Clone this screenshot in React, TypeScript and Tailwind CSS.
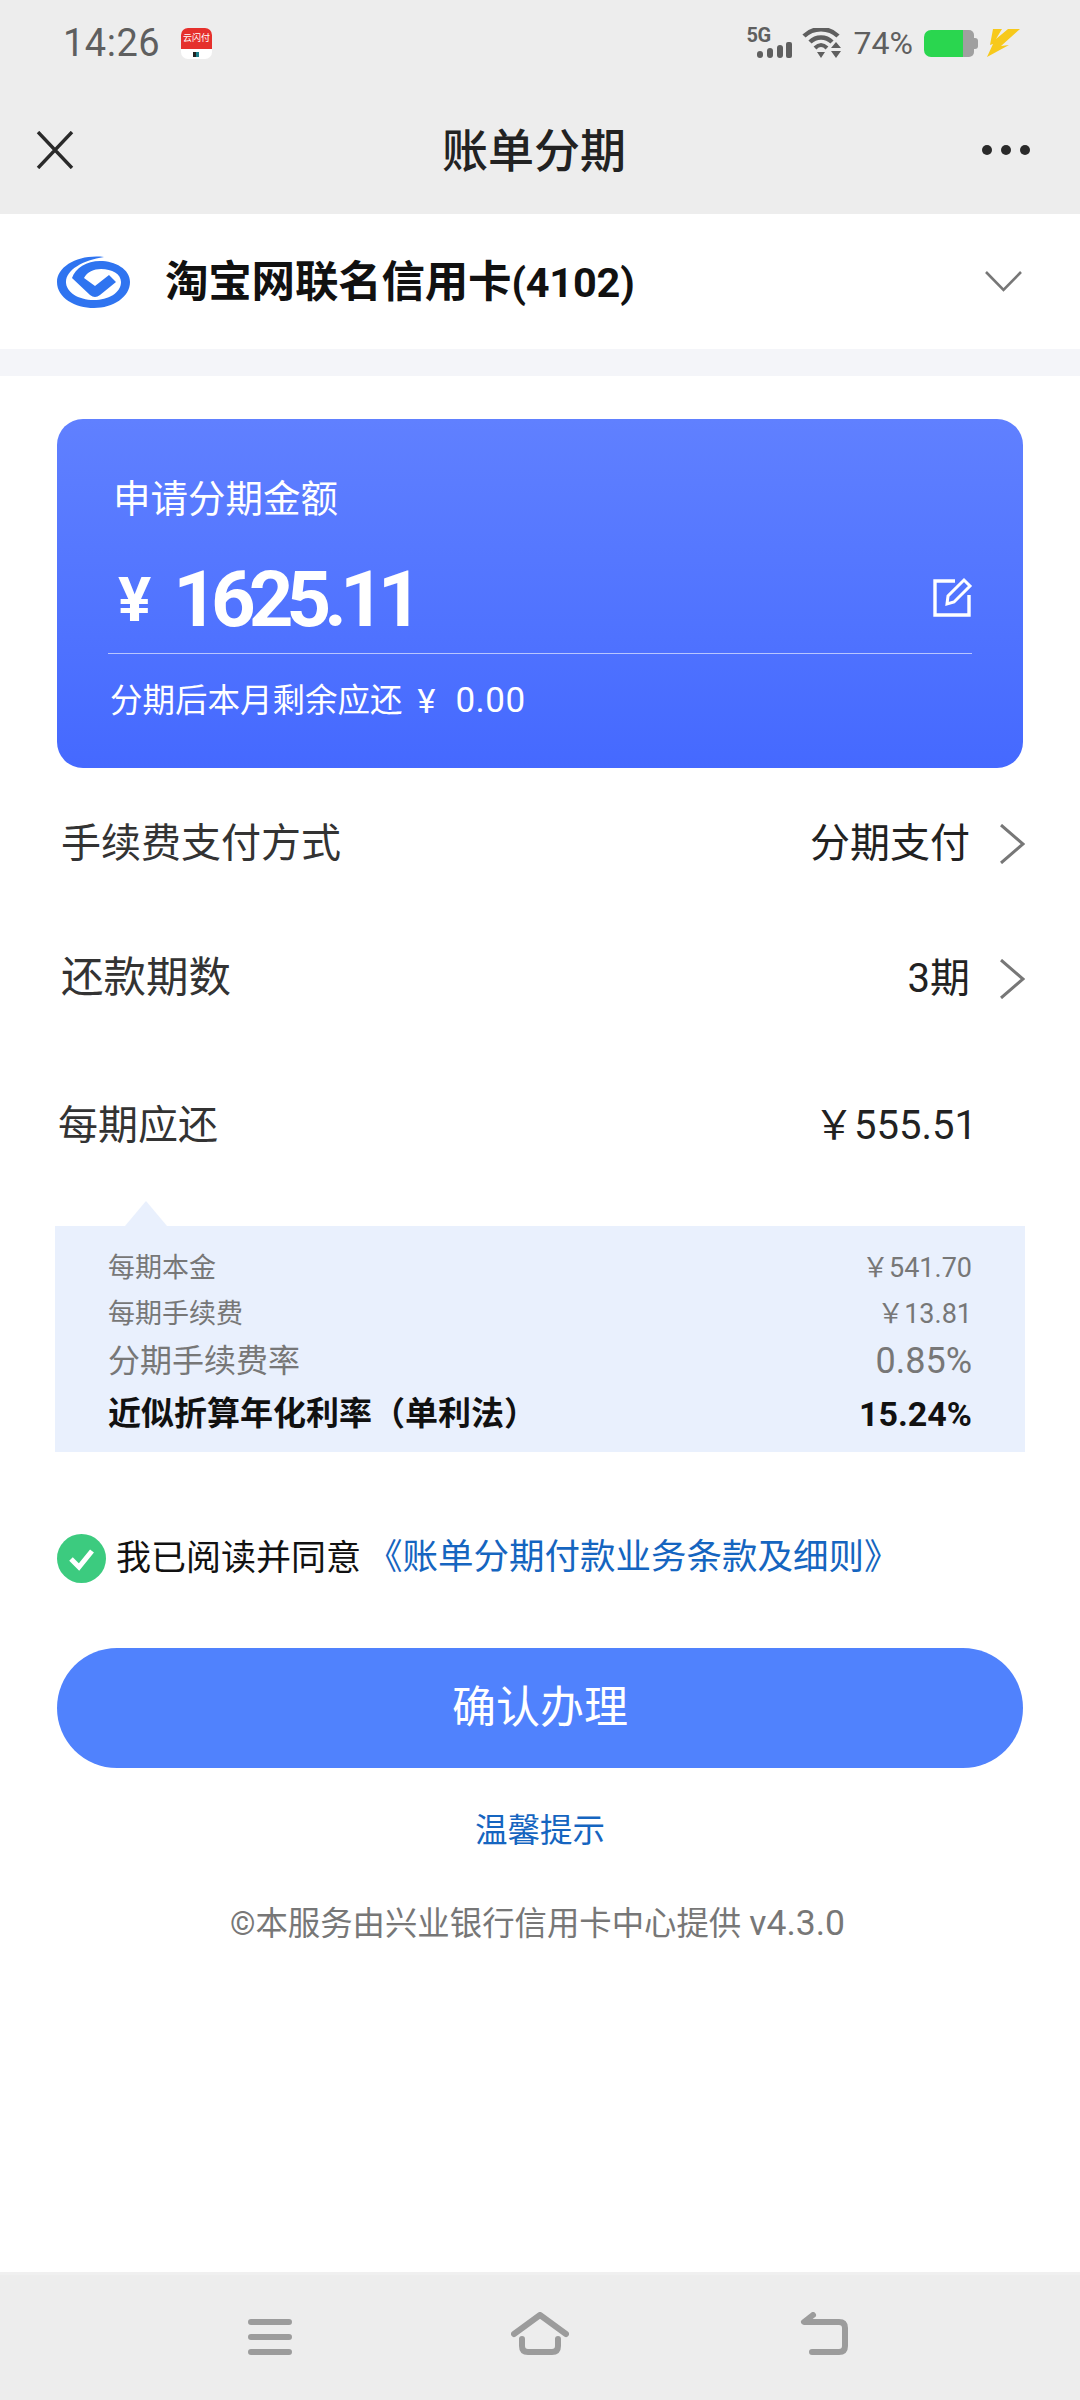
import React from 'react';

const FONT = "font-['Roboto','Noto_Sans_CJK_SC',sans-serif]";

function StatusBar() {
  return (
    <div className="flex h-[86px] items-center justify-between pl-[63px] pr-[60px] text-[#5f5f5f]">
      <div className="flex items-center gap-[21px]">
        <span className="text-[38px] leading-none tracking-[0.5px]">14:26</span>
        <svg width="31" height="31" viewBox="0 0 31 31">
          <rect width="31" height="31" rx="7" fill="#fff" />
          <path d="M0 7a7 7 0 0 1 7-7h17a7 7 0 0 1 7 7v14H0z" fill="#e5302c" />
          <text x="15.500" y="13" textAnchor="middle" fontSize="9" fill="#fff">云闪付</text>
          <rect x="12" y="24" width="3" height="5" fill="#222" />
          <rect x="15" y="24" width="3" height="5" fill="#1b7f8a" />
        </svg>
      </div>
      <div className="flex items-center">
        <div className="relative mr-[10px] h-[30px] w-[45px]">
          <span className="absolute left-0 top-[-4px] text-[20px] font-bold leading-[22px] tracking-[-0.5px]">5G</span>
          <svg className="absolute bottom-0 right-0" width="35" height="16" viewBox="0 0 35 16" fill="#5f5f5f">
            <rect x="0" y="9" width="6" height="7" rx="3" />
            <rect x="10" y="6" width="6" height="10" rx="3" />
            <rect x="20" y="3" width="6" height="13" rx="3" />
            <rect x="29" y="0" width="6" height="16" rx="2" />
          </svg>
        </div>
        <svg className="mr-[11px]" width="41" height="30" viewBox="0 0 41 30" fill="none">
          <path d="M2 8C11-1 27-1 36 8" stroke="#5f5f5f" strokeWidth="4.500" />
          <path d="M8 14C14 8 24 8 30 14" stroke="#5f5f5f" strokeWidth="4.500" />
          <path d="M13 20C17 16 21 16 25 20" stroke="#5f5f5f" strokeWidth="4" />
          <path d="M15 24h8l-4 6zM29 20l5-6 5 6zM29 23h10l-5 7z" fill="#5f5f5f" />
        </svg>
        <span className="mr-[11px] text-[32px] leading-none">74%</span>
        <div className="mr-[9px] flex h-[27px] w-[54px] items-center">
          <div className="h-full w-[39px] rounded-l-[7px] bg-[#2ad64f]" />
          <div className="h-full w-[11px] rounded-r-[5px] bg-[#a0a0a0]" />
          <div className="h-[11px] w-[4px] rounded-r-[3px] bg-[#a0a0a0]" />
        </div>
        <svg width="33" height="28" viewBox="0 0 33 28" fill="#f7c91c">
          <path d="M6 0h9L9 10l12-10h12L14 17l8-1L0 28l6-13-3 1z" />
        </svg>
      </div>
    </div>
  );
}

function TitleBar() {
  return (
    <div className="flex h-[128px] items-center justify-between pl-[36px] pr-[50px]">
      <svg width="38" height="38" viewBox="0 0 38 38" stroke="#2a2a2a" strokeWidth="3.400" fill="none">
        <path d="M2 1l34 36M36 1L2 37" />
      </svg>
      <h1 className="ml-[12px] mt-[2px] text-[46px] font-medium leading-none text-[#222]">账单分期</h1>
      <div className="flex gap-[9px]">
        <div className="h-[10px] w-[10px] rounded-full bg-[#2a2a2a]" />
        <div className="h-[10px] w-[10px] rounded-full bg-[#2a2a2a]" />
        <div className="h-[10px] w-[10px] rounded-full bg-[#2a2a2a]" />
      </div>
    </div>
  );
}

function CardSelect() {
  return (
    <div className="flex h-[135px] items-center bg-white pl-[57px] pr-[58px]">
      <svg width="73" height="54" viewBox="0 0 73 54" fill="#2f74f0">
        <path d="M47 2C22-1 0 11 0 27C0 43 18 53 37 53C56 53 73 42 73 27C73 14 58 6 43 6C30 6 18 13 15 23L33 40Q38 44 43 40L59 27L52 20L38 31L27 23C30 17 37 14 44 14C55 14 64 19 64 27C64 38 51 45 37 45C21 45 9 37 9 27C9 15 26 5 47 2Z" />
      </svg>
      <span className="ml-[35px] mt-[2px] text-[43.500px] font-bold leading-none tracking-[-0.2px] text-[#111]">
        淘宝网联名信用卡<span className="text-[41.500px]">(4102)</span>
      </span>
      <svg className="ml-auto" width="37" height="21" viewBox="0 0 37 21" fill="none" stroke="#777" strokeWidth="2.600">
        <path d="M1 1l17.500 18L36 1" />
      </svg>
    </div>
  );
}

function AmountCard() {
  return (
    <div className="mx-[57px] flex h-[349px] flex-col rounded-[26px] bg-gradient-to-b from-[#6080ff] to-[#4569ff] px-[51px] text-white">
      <div className="ml-[5px] mt-[60px] text-[37.500px] leading-[40px]">申请分期金额</div>
      <div className="mt-[51px] flex h-[60px] items-center">
        <span className="ml-[10px] text-[62px] font-bold leading-none">¥</span>
        <span className="ml-[22px] text-[78px] font-bold leading-none tracking-[-7px]">1625.11</span>
        <svg className="mb-[6px] ml-auto mr-[-1px]" width="40" height="40" viewBox="0 0 40 40" fill="none" stroke="#fff" strokeWidth="3.400">
          <path d="M22 4H2v34h34V18" />
          <path d="M14 27l1-8L31 3l6 6-16 16z" strokeWidth="3" />
        </svg>
      </div>
      <div className="mt-[23px] h-[1px] bg-white/60" />
      <div className="ml-[2px] mt-[27px] flex items-center text-[32.500px] leading-[40px]">
        <span>分期后本月剩余应还</span>
        <span className="ml-[15px] text-[34px]">¥</span>
        <span className="ml-[20px] text-[35px] tracking-[0.5px]">0.00</span>
      </div>
    </div>
  );
}

function SelectRow({ label, value, labelClass }: { label: string; value: string; labelClass: string }) {
  return (
    <div className="flex h-[135px] items-center pl-[61px] pr-[55px] text-[40px] leading-none">
      <span className={`text-[#333] ${labelClass}`}>{label}</span>
      <span className="ml-auto text-[#222]">{value}</span>
      <svg className="ml-[29px]" width="26" height="40" viewBox="0 0 26 40" fill="none" stroke="#777" strokeWidth="3">
        <path d="M2 1l22 19L2 39" />
      </svg>
    </div>
  );
}

function DetailRow({ label, value, className, valueClass = '' }: { label: string; value: string; className: string; valueClass?: string }) {
  return (
    <div className={`flex items-center justify-between ${className}`}>
      <span>{label}</span>
      <span className={valueClass}>{value}</span>
    </div>
  );
}

function Detail() {
  return (
    <div className="relative mx-[55px] mt-[70px] flex h-[226px] flex-col bg-[#e9f0fd] px-[53px] pt-[22px]">
      <svg className="absolute left-[70px] top-[-25px]" width="42" height="25" viewBox="0 0 42 25" fill="#e9f0fd">
        <path d="M0 25L21 0l21 25z" />
      </svg>
      <DetailRow label="每期本金" value="￥541.70" className="h-[40px] text-[27px] text-[#777]" />
      <DetailRow label="每期手续费" value="￥13.81" className="mt-[6px] h-[40px] text-[27px] text-[#777]" />
      <DetailRow label="分期手续费率" value="0.85%" className="mt-[7px] h-[40px] text-[32px] text-[#777]" valueClass="text-[36px]" />
      <DetailRow label="近似折算年化利率（单利法）" value="15.24%" className="mt-[13px] h-[40px] text-[33px] font-bold text-[#111]" valueClass="text-[34px]" />
    </div>
  );
}

function NavBar() {
  return (
    <div className="mt-auto h-[128px] border-t-[3px] border-[#f0f0f0] bg-[#ededed]">
      <div className="flex items-start pl-[248px] pt-[37px]">
        <svg className="mt-[7px]" width="44" height="36" viewBox="0 0 44 36" fill="none" stroke="#9c9c9c" strokeWidth="6" strokeLinecap="round">
          <path d="M3 3h38M3 18h38M3 33h38" />
        </svg>
        <svg className="ml-[219px]" width="58" height="43" viewBox="0 0 58 43" fill="none" stroke="#9c9c9c" strokeWidth="6" strokeLinecap="round" strokeLinejoin="round">
          <path d="M3 22L29 3l26 19" />
          <path d="M11 27v7q0 6 6 6h24q6 0 6-6v-7" />
        </svg>
        <svg className="ml-[231px]" width="49" height="43" viewBox="0 0 49 43" fill="none" stroke="#9c9c9c" strokeWidth="6" strokeLinecap="round" strokeLinejoin="round">
          <path d="M13 3L4 10h35q6 0 6 6v18q0 6-6 6H12" />
        </svg>
      </div>
    </div>
  );
}

export default function App() {
  return (
    <div className={`flex h-[2400px] w-[1080px] flex-col overflow-hidden bg-white ${FONT}`}>
      <div className="bg-[#ededed]">
        <StatusBar />
        <TitleBar />
      </div>
      <CardSelect />
      <div className="h-[27px] bg-[#f4f5f9]" />
      <div className="h-[43px]" />
      <AmountCard />
      <div className="mt-[8px]">
        <SelectRow label="手续费支付方式" value="分期支付" labelClass="" />
        <SelectRow label="还款期数" value="3期" labelClass="text-[42.500px]" />
      </div>
      <div className="mt-[50px] flex h-[60px] items-center justify-between pl-[58px] pr-[103px] text-[40px] leading-none">
        <span className="text-[#333]">每期应还</span>
        <span className="text-[#222]">￥555.51</span>
      </div>
      <Detail />
      <div className="mt-[81px] flex h-[50px] items-center pl-[57px]">
        <svg width="49" height="49" viewBox="0 0 49 49">
          <circle cx="24.500" cy="24.500" r="24.500" fill="#3ccb7f" />
          <path d="M14 25l8 8 13-16" fill="none" stroke="#fff" strokeWidth="5" />
        </svg>
        <span className="ml-[10px] text-[35px] leading-none text-[#111]">我已阅读并同意</span>
        <span className="ml-[6px] text-[35.500px] leading-none text-[#1565c0]">《账单分期付款业务条款及细则》</span>
      </div>
      <button className="mx-[57px] mt-[65px] flex h-[120px] items-center justify-center rounded-full bg-[#5082fd] text-[44px] text-white">确认办理</button>
      <div className="mt-[43px] text-center text-[32.500px] leading-[40px] text-[#1565c0]">温馨提示</div>
      <div className="mt-[52px] pr-[5px] text-center text-[32.400px] leading-[40px] text-[#777]">
        ©本服务由兴业银行信用卡中心提供<span className="ml-[8px] text-[35.500px]">v4.3.0</span>
      </div>
      <NavBar />
    </div>
  );
}
